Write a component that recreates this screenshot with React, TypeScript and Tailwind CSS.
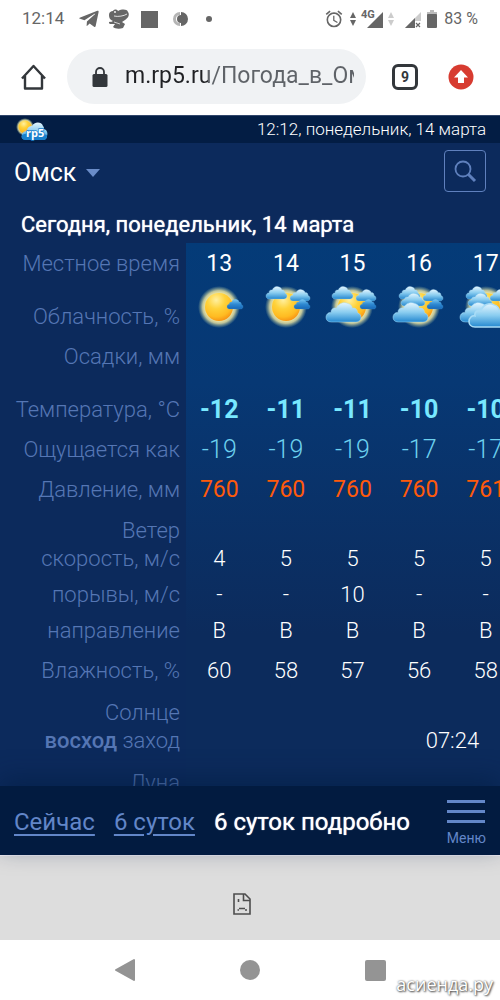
import { FaTelegramPlane } from "react-icons/fa";
import { MdOutlineAlarm } from "react-icons/md";

const CLOUD =
  "M6 26C2 26 0 23 0 20C0 16 3 13 6 14C5 9 9 7 12 8C14 2 20 -1 25 2C28 3 30 5 30 8C34 7 36 10 36 14C39 15 40 18 40 20C40 24 37 26 34 26Z";

type CloudProps = { x: number; y: number; w: number; h: number; dark?: boolean };

const farLeft: CloudProps = { x: -20, y: -21, w: 21, h: 13 };
const farRight: CloudProps = { x: 4, y: -18, w: 20, h: 12 };
const small: CloudProps = { x: 8, y: -8, w: 16, h: 10, dark: true };
const middle: CloudProps = { x: -18, y: -14, w: 24, h: 13 };
const big: CloudProps = { x: -26, y: -5, w: 35, h: 20 };
const front: CloudProps = { x: -17, y: -4, w: 40, h: 24 };

const hours = [
  { time: "13", clouds: [small], temp: "-12", feels: "-19", pressure: "760", wind: "4", gusts: "-", direction: "В", humidity: "60" },
  { time: "14", clouds: [farLeft, farRight, small], temp: "-11", feels: "-19", pressure: "760", wind: "5", gusts: "-", direction: "В", humidity: "58" },
  { time: "15", clouds: [farLeft, farRight, small, big], temp: "-11", feels: "-19", pressure: "760", wind: "5", gusts: "10", direction: "В", humidity: "57" },
  { time: "16", clouds: [farLeft, farRight, small, middle, big], temp: "-10", feels: "-17", pressure: "760", wind: "5", gusts: "-", direction: "В", humidity: "56" },
  { time: "17", clouds: [farLeft, farRight, middle, big, front], temp: "-10", feels: "-17", pressure: "761", wind: "5", gusts: "-", direction: "В", humidity: "58" },
];

function Gradients() {
  return (
    <svg className="absolute h-0 w-0" aria-hidden="true">
      <defs>
        <radialGradient id="glow">
          <stop offset="0.6" stopColor="#fff3a8" />
          <stop offset="0.78" stopColor="#efe8a4" stopOpacity="0.8" />
          <stop offset="1" stopColor="#a9c6a0" stopOpacity="0" />
        </radialGradient>
        <radialGradient id="sun" cx="0.4" cy="0.25" r="0.8">
          <stop offset="0" stopColor="#fff0a0" />
          <stop offset="0.4" stopColor="#ffd23a" />
          <stop offset="0.75" stopColor="#ffbb22" />
          <stop offset="1" stopColor="#f58a12" />
        </radialGradient>
        <linearGradient id="cloud" x1="0" y1="0" x2="0" y2="1">
          <stop offset="0" stopColor="#e4f5fe" />
          <stop offset="0.5" stopColor="#8acdf0" />
          <stop offset="1" stopColor="#2588d0" />
        </linearGradient>
        <linearGradient id="cloudDark" x1="0" y1="0" x2="0" y2="1">
          <stop offset="0" stopColor="#7cc8f2" />
          <stop offset="0.5" stopColor="#2f8ad2" />
          <stop offset="1" stopColor="#1767b8" />
        </linearGradient>
      </defs>
    </svg>
  );
}

function WeatherIcon({ clouds }: { clouds: CloudProps[] }) {
  return (
    <svg className="mx-auto h-[46px] w-14" viewBox="-28 -22 56 46" aria-hidden="true">
      <circle cx="0" cy="0" r="21" fill="url(#glow)" />
      <circle cx="0" cy="0" r="14" fill="url(#sun)" />
      {clouds.map((c, i) => (
        <path
          key={i}
          d={CLOUD}
          transform={`translate(${c.x} ${c.y}) scale(${c.w / 40} ${c.h / 26})`}
          fill={c.dark ? "url(#cloudDark)" : "url(#cloud)"}
          stroke={c.dark ? "#4aa3e0" : "#a9dcf6"}
          strokeWidth={c === front ? 1.6 : 0.6}
        />
      ))}
    </svg>
  );
}

function Logo() {
  return (
    <svg className="h-6 w-8" viewBox="0 0 32 24" aria-hidden="true">
      <circle cx="9" cy="9" r="9" fill="url(#glow)" />
      <circle cx="9" cy="9" r="6.5" fill="url(#sun)" />
      <path
        d="M10 22C6 22 5 19 6 17C6 14 9 13 11 13C11 9 14 8 16 8C18 4 25 3 27 8C28 9 28 10 28 11C31 12 32 15 31 18C31 21 29 22 27 22Z"
        fill="url(#cloud)"
      />
      <path d="M6 17C12 14 26 15 31 17C31 21 29 22 27 22H10C6 22 5 19 6 17Z" fill="#1a80cc" />
      <text
        x="10"
        y="19"
        fill="#fff"
        stroke="#1a80cc"
        strokeWidth="1.5"
        paintOrder="stroke"
        fontFamily="Open Sans, sans-serif"
        fontSize="11"
        fontWeight="700"
      >
        rp5
      </text>
    </svg>
  );
}

function DataArrows({ className }: { className: string }) {
  return (
    <svg className={className} viewBox="0 0 6 16" fill="currentColor" aria-hidden="true">
      <path d="M3 1L6 7H0ZM3 15L0 9H6Z" />
    </svg>
  );
}

function StatusBar() {
  return (
    <div className="flex h-[38px] items-center justify-between px-[22px] text-[#666]">
      <div className="flex items-center">
        <span className="text-[17px]">12:14</span>
        <FaTelegramPlane className="ml-3.5 h-[22px] w-[22px]" />
        <svg className="ml-2 h-5 w-[22px]" viewBox="0 0 22 20" aria-hidden="true">
          <path
            d="M1 6C1 3 3 2 5 2C6 0 9 0 10 2C14 0 19 0 20 3C22 6 20 9 17 11L14 13L17 15L15 19C12 20 7 20 5 18L7 15L2 15C0 14 1 12 3 13L5 12C2 11 1 9 1 6Z"
            fill="#666"
          />
          <path d="M6 7C10 8 16 7 19 5" fill="none" stroke="#fff" strokeWidth="0.8" />
          <path d="M6 13L12 15" stroke="#fff" strokeWidth="0.7" />
          <circle cx="7" cy="3" r="0.9" fill="#fff" />
        </svg>
        <span className="ml-[11px] h-[17px] w-[17px] bg-[#666]" />
        <svg className="ml-3.5 h-4 w-4" viewBox="0 0 16 16" aria-hidden="true">
          <path d="M8 1A7 7 0 0 0 8 15L8 12A4 4 0 0 1 8 4Z" fill="#b5b5b5" />
          <path d="M9 1A7 7 0 0 1 9 15V12A4 4 0 0 1 5 8A4 4 0 0 1 9 4Z" fill="#666" />
        </svg>
        <span className="ml-[18px] h-1.5 w-1.5 rounded-full bg-[#666]" />
      </div>
      <div className="flex items-center">
        <MdOutlineAlarm className="h-5 w-5" />
        <DataArrows className="ml-1.5 h-4 w-1.5" />
        <svg className="ml-1 h-5 w-6" viewBox="0 0 24 20" fill="currentColor" aria-label="4G">
          <path d="M23 3V19H7Z" />
          <text
            x="1"
            y="9"
            stroke="#fff"
            strokeWidth="2"
            paintOrder="stroke"
            fontFamily="Roboto, sans-serif"
            fontSize="11"
            fontWeight="700"
          >
            4G
          </text>
        </svg>
        <DataArrows className="ml-1 h-4 w-1.5 text-[#ccc]" />
        <svg className="ml-2.5 h-5 w-[18px]" viewBox="0 0 18 20" aria-hidden="true">
          <path d="M17 3V12H11V19H1Z" fill="#ccc" />
          <path d="M11 9V19H1Z" fill="#666" />
          <path d="M12 14L16 18M16 14L12 18" stroke="#666" strokeWidth="1.2" />
        </svg>
        <svg className="ml-1 h-5 w-3" viewBox="0 0 12 20" aria-hidden="true">
          <path d="M4 1H8V3H11V6H1V3H4Z" fill="#bbb" />
          <rect x="1" y="5" width="10" height="14" rx="1" fill="#666" />
        </svg>
        <span className="ml-1.5 text-base">83 %</span>
      </div>
    </div>
  );
}

function BrowserBar() {
  return (
    <div className="flex items-center py-[11px] pr-[26px] pl-5">
      <button type="button" aria-label="Домой" className="text-[#33373b]">
        <svg className="h-[26px] w-[27px]" viewBox="0 0 27 26" fill="none" stroke="currentColor" strokeWidth="2.4">
          <path d="M2 14.5L13.5 2L25 14.5M5 12V24.5H22V12" strokeLinejoin="round" />
        </svg>
      </button>
      <div className="ml-5 flex h-[55px] flex-1 items-center rounded-full bg-[#f0f2f4] pr-3 pl-[25px]">
        <svg className="h-5 w-4 shrink-0" viewBox="0 0 16 20" aria-hidden="true">
          <rect x="0.5" y="7" width="15" height="13" rx="1.5" fill="#33373b" />
          <path d="M4 8V5A4 4 0 0 1 12 5V8" fill="none" stroke="#33373b" strokeWidth="1.8" />
        </svg>
        <input
          type="text"
          aria-label="Адрес"
          defaultValue="m.rp5.ru/Погода_в_Омске"
          className="ml-[17px] w-full min-w-0 bg-[linear-gradient(90deg,#202124_83px,#5f6368_83px)] bg-clip-text text-[23px] text-transparent outline-none"
        />
      </div>
      <button
        type="button"
        aria-label="Вкладки"
        className="ml-[26px] flex h-[26px] w-[26px] items-center justify-center rounded-md border-[3px] border-[#33373b] text-sm font-bold text-[#33373b]"
      >
        9
      </button>
      <button type="button" aria-label="Обновить" className="ml-[30px]">
        <svg className="h-[26px] w-[26px]" viewBox="0 0 26 26">
          <circle cx="13" cy="13" r="12.5" fill="#d73b30" />
          <path d="M13 6L20 13.5H16V19H10V13.5H6Z" fill="#fff" />
        </svg>
      </button>
    </div>
  );
}

function Forecast() {
  const label = "pr-1.5 text-right font-light text-[#5576b4]";

  return (
    <div className="overflow-hidden bg-[linear-gradient(180deg,#043b78_0px,#073874_140px,#0c2b5c_390px)] bg-[position:186px_0px] bg-no-repeat">
      <table className="w-[519px] table-fixed text-center text-[22px] leading-7 font-light text-white">
        <thead>
          <tr className="h-[42px]">
            <th scope="col" className={`w-[186px] ${label}`}>
              Местное время
            </th>
            {hours.map((h) => (
              <th key={h.time} scope="col" className="text-[23px] font-normal">
                {h.time}
              </th>
            ))}
          </tr>
        </thead>
        <tbody>
          <tr className="h-[52px]">
            <th scope="row" className={`pb-1.5 align-bottom ${label}`}>
              Облачность, %
            </th>
            {hours.map((h) => (
              <td key={h.time} className="align-top">
                <WeatherIcon clouds={h.clouds} />
              </td>
            ))}
          </tr>
          <tr className="h-[52px]">
            <th scope="row" className={`pt-1.5 align-top ${label}`}>
              Осадки, мм
            </th>
            <td colSpan={5} />
          </tr>
          <tr className="h-[41px]">
            <th scope="row" className={label}>
              Температура, °C
            </th>
            {hours.map((h) => (
              <td key={h.time} className="text-[25px] font-bold text-[#78e8ff]">
                {h.temp}
              </td>
            ))}
          </tr>
          <tr className="h-10">
            <th scope="row" className={label}>
              Ощущается как
            </th>
            {hours.map((h) => (
              <td key={h.time} className="text-[25px] text-[#6cd0ee]">
                {h.feels}
              </td>
            ))}
          </tr>
          <tr className="h-10">
            <th scope="row" className={label}>
              Давление, мм
            </th>
            {hours.map((h) => (
              <td key={h.time} className="text-[23px] font-normal text-[#ff5a0a]">
                {h.pressure}
              </td>
            ))}
          </tr>
          <tr className="h-[67px] align-bottom">
            <th scope="row" className={`pb-1 ${label}`}>
              Ветер
              <br />
              скорость, м/с
            </th>
            {hours.map((h) => (
              <td key={h.time} className="pb-1">
                {h.wind}
              </td>
            ))}
          </tr>
          <tr className="h-9">
            <th scope="row" className={label}>
              порывы, м/с
            </th>
            {hours.map((h) => (
              <td key={h.time}>{h.gusts}</td>
            ))}
          </tr>
          <tr className="h-9">
            <th scope="row" className={label}>
              направление
            </th>
            {hours.map((h) => (
              <td key={h.time}>{h.direction}</td>
            ))}
          </tr>
          <tr className="h-11">
            <th scope="row" className={label}>
              Влажность, %
            </th>
            {hours.map((h) => (
              <td key={h.time}>{h.humidity}</td>
            ))}
          </tr>
          <tr className="h-[66px] align-bottom">
            <th scope="row" className={`pb-1 ${label}`}>
              Солнце
              <br />
              <b className="font-medium">восход</b> заход
            </th>
            <td colSpan={3} />
            <td colSpan={2} className="pb-1">
              07:24
            </td>
          </tr>
          <tr className="h-[66px]">
            <th scope="row" className={`pt-2.5 align-top ${label}`}>
              Луна
            </th>
            <td colSpan={5} />
          </tr>
        </tbody>
      </table>
    </div>
  );
}

export default function App() {
  return (
    <div className="flex h-screen flex-col overflow-hidden bg-white font-['Roboto',sans-serif]">
      <Gradients />
      <StatusBar />
      <BrowserBar />

      <header className="flex h-7 shrink-0 items-center justify-between border-t border-[#31466b] bg-[#031d44] pr-3.5 pl-4 text-[17px] font-light text-white">
        <Logo />
        <span>12:12, понедельник, 14 марта</span>
      </header>

      <main className="min-h-0 flex-1 overflow-hidden bg-[#0c2a5c] text-white">
        <div className="flex h-[60px] items-center justify-between px-3.5">
          <button type="button" className="flex items-center gap-2.5 text-[25px]">
            Омск
            <svg className="h-2 w-3.5" viewBox="0 0 14 8" aria-hidden="true">
              <path d="M0 0H14L7 8Z" fill="#6a8cc8" />
            </svg>
          </button>
          <button
            type="button"
            aria-label="Поиск"
            className="mb-1 flex h-[42px] w-[42px] items-center justify-center rounded border border-[#5f80bd] text-[#5f80bd]"
          >
            <svg className="h-6 w-6" viewBox="0 0 24 24" fill="none" stroke="currentColor">
              <circle cx="10" cy="10" r="7.5" strokeWidth="1.8" />
              <path d="M15.500 15.500L22 22" strokeWidth="3" />
            </svg>
          </button>
        </div>
        <h1 className="h-10 pl-[21px] text-[22px] leading-11 whitespace-nowrap [text-shadow:0_0_1px_#fff]">
          Сегодня, понедельник, 14 марта
        </h1>
        <Forecast />
      </main>

      <nav className="relative flex h-[69px] shrink-0 items-center justify-between bg-[#021b40] px-3.5 text-[#6286c8] shadow-[0_-8px_24px_rgba(2,27,64,0.5)]">
        <div className="flex items-center gap-[19px] pt-0.5 text-2xl whitespace-nowrap">
          <a href="#now" className="underline underline-offset-4">
            Сейчас
          </a>
          <a href="#days" className="underline underline-offset-4">
            6 суток
          </a>
          <span className="text-white [text-shadow:0_0_1px_#fff]">6 суток подробно</span>
        </div>
        <button type="button" className="flex flex-col items-center gap-[7px] pt-1 text-sm leading-4">
          <span className="h-[3px] w-[38px] bg-[#6286c8]" />
          <span className="h-[3px] w-[38px] bg-[#6286c8]" />
          <span className="h-[3px] w-[38px] bg-[#6286c8]" />
          Меню
        </button>
      </nav>

      <aside className="flex h-[85px] shrink-0 items-center justify-center border-t border-[#f0edf4] bg-[#ddd] pt-3 pr-4">
        <svg className="h-[22px] w-[18px]" viewBox="0 0 18 22" fill="none" stroke="#4d4d4d" strokeWidth="1.6" aria-hidden="true">
          <path d="M1 1H12L17 6V21H1Z" />
          <path d="M10.500 1V7.500H17" />
          <path d="M5.500 6V9M4.500 17H6M6 15.500H12M12 17H14" />
        </svg>
      </aside>

      <footer className="relative h-[60px] shrink-0">
        <div className="grid h-full grid-cols-[1fr_125px_1fr] items-center text-[#949494]">
          <button type="button" aria-label="Назад" className="justify-self-end pr-[53px]">
            <svg className="h-6 w-5" viewBox="0 0 20 24" fill="currentColor" stroke="currentColor" strokeWidth="2" strokeLinejoin="round">
              <path d="M1 12L19 2V22Z" />
            </svg>
          </button>
          <button type="button" aria-label="Главный экран" className="h-5 w-5 justify-self-center rounded-full bg-[#949494]" />
          <button type="button" aria-label="Недавние" className="ml-[52px] h-[21px] w-[21px] rounded-xs bg-[#949494]" />
        </div>
        <span className="absolute right-[7px] bottom-0.5 font-['Open_Sans',sans-serif] text-lg text-white [text-shadow:0_0_2px_#555,1px_1px_2px_#444]">
          асиенда.ру
        </span>
      </footer>
    </div>
  );
}
